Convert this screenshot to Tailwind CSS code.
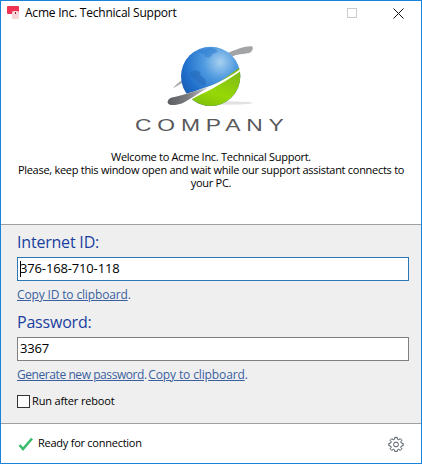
<!DOCTYPE html>
<html lang="en">
<head>
    <meta charset="UTF-8">
    <title>Acme Inc. Technical Support</title>
    <script src="https://cdn.jsdelivr.net/npm/@tailwindcss/browser@4"></script>
</head>
<body class="bg-white">
<div class="w-[422px] h-[464px] flex flex-col border border-[#1883d7] font-['Open_Sans',sans-serif] text-[12px] text-black overflow-hidden">
    <!-- title bar -->
    <header class="h-[30px] pb-[6px] flex items-center shrink-0 pl-[6px]">
        <svg width="13" height="14" viewBox="0 0 13 14" class="mr-[5px]">
            <rect x="0" y="0" width="12" height="8" rx="1" fill="#ee3355"/>
            <rect x="5" y="5" width="7" height="8" rx="1.5" fill="#f8d4d8"/>
            <rect x="8" y="6" width="1" height="2" fill="#8a2a38"/>
        </svg>
        <span class="tracking-[-0.22px]">Acme Inc. Technical Support</span>
        <div class="ml-auto flex items-center">
            <div class="w-[10px] h-[10px] border border-[#cccccc] mr-[36px]"></div>
            <svg width="11" height="11" viewBox="0 0 11 11" class="mr-[17px]"><path d="M.5.5l10 10M10.5.5l-10 10" stroke="#111" stroke-width="1" fill="none"/></svg>
        </div>
    </header>

    <!-- logo and welcome text -->
    <section class="h-[193px] shrink-0 flex flex-col items-center">
        <svg width="180" height="110" viewBox="0 0 540 330" class="shrink-0">
            <defs>
                <radialGradient id="blue" cx="0.66" cy="0.26" r="0.8">
                    <stop offset="0" stop-color="#a8d0f0"/>
                    <stop offset="0.35" stop-color="#4f9ae0"/>
                    <stop offset="0.75" stop-color="#1f6fcb"/>
                    <stop offset="1" stop-color="#1a5cb0"/>
                </radialGradient>
                <linearGradient id="green" x1="0.8" y1="0" x2="0.3" y2="1">
                    <stop offset="0" stop-color="#78b21c"/>
                    <stop offset="0.6" stop-color="#97d806"/>
                    <stop offset="1" stop-color="#74b40c"/>
                </linearGradient>
                <linearGradient id="swoosh" x1="0" y1="0" x2="1" y2="0">
                    <stop offset="0" stop-color="#5a5c5f"/>
                    <stop offset="0.5" stop-color="#7b7d80"/>
                    <stop offset="1" stop-color="#c4c5c7"/>
                </linearGradient>
                <clipPath id="globe"><circle cx="269" cy="136" r="89"/></clipPath>
            </defs>
            <ellipse cx="310" cy="216" rx="85" ry="5" fill="#e2e2e2"/>
            <path d="M320 66C345 55 375 44 392 46C399 50 395 62 385 66C368 69 345 70 335 76Z" fill="#a3a4a6"/>
            <path d="M156 172C163 162 172 155 182 148L183 156C174 161 165 167 156 172Z" fill="#a9aaac"/>
            <circle cx="269" cy="136" r="89" fill="url(#blue)"/>
            <g clip-path="url(#globe)">
                <path d="M230 62l14-6 22-6 18 4 6 8-16 8-8 10-12-2-6-10-12-2Z" fill="#2f7bcf" opacity="0.55"/>
                <path d="M208 122l14-5 14 5 3 13 13 8 4 14-8 8-12-8-14-13-12-10Z" fill="#2568b8" opacity="0.55"/>
                <path d="M150 240L210 195L300 150L380 92L380 240Z" fill="url(#green)"/>
            </g>
            <path d="M150 200C195 190 250 172 290 155C325 138 355 118 383 95C365 118 340 134 310 152C285 167 262 180 240 190C215 204 195 214 180 218C160 223 143 224 140 215C139 209 143 203 150 200Z" fill="#ffffff"/>
            <path d="M150 200C175 195 225 181 262 168C245 180 225 192 205 205C195 212 187 216 180 218C160 223 143 224 140 215C139 209 143 203 150 200Z" fill="url(#swoosh)"/>
            <text transform="translate(42 301) scale(1.4 1)" fill="#58595b" font-family="Liberation Sans, sans-serif" font-size="49" letter-spacing="12.5">COMPANY</text>
        </svg>
        <p class="mt-[9px] w-[400px] text-center text-[11px] leading-[13px] tracking-[-0.28px]">Welcome to Acme Inc. Technical Support.<br>Please, keep this window open and wait while our support assistant connects to your PC.</p>
    </section>

    <!-- id and password -->
    <main class="flex-1 bg-[#efefef] border-y border-[#a0a0a0] px-[16px] pt-[6px]">
        <h2 class="text-[16px] leading-[22px] text-[#1a3fa0] tracking-[-0.2px]">Internet ID:</h2>
        <div class="relative mt-[4px] w-[392px] h-[24px] border border-[#2b77b5] bg-white flex items-center pl-[2px] text-[13px] tracking-[-0.15px]">
            376-168-710-118
            <span class="absolute left-[2px] top-[3px] w-px h-[16px] bg-black"></span>
        </div>
        <a class="block mt-[6px] leading-[16px] text-[#3a5f9e] tracking-[-0.15px]"><span class="underline">Copy ID to clipboard</span>.</a>
        <h2 class="mt-[8px] text-[16px] leading-[22px] text-[#1a3fa0] tracking-[-0.2px]">Password:</h2>
        <div class="mt-[4px] w-[392px] h-[24px] border border-[#808080] bg-white flex items-center pl-[2px] text-[13px] tracking-[-0.15px]">3367</div>
        <p class="mt-[6px] leading-[16px] text-[#3a5f9e] tracking-[-1px]"><a class="underline tracking-[-0.43px]">Generate new password</a>. <a class="underline tracking-[-0.12px]">Copy to clipboard</a>.</p>
        <label class="mt-[10px] flex items-center gap-[2px] text-[11px] tracking-[-0.15px]">
            <span class="w-[13px] h-[13px] border border-[#333333] bg-white"></span>
            <span>Run after reboot</span>
        </label>
    </main>

    <!-- status bar -->
    <footer class="h-[39px] shrink-0 flex items-center pl-[17px] pr-[17px]">
        <svg width="16" height="14" viewBox="0 0 16 14" class="mr-[4px]"><path d="M1.5 8l3.5 4L14 1.5" stroke="#3dbb6c" stroke-width="2.6" fill="none"/></svg>
        <span class="text-[11px] tracking-[-0.25px]">Ready for connection</span>
        <svg width="16" height="16" viewBox="0 0 24 24" class="ml-auto" fill="none" stroke="#4a5160" stroke-width="1.5">
            <path d="M10.3 2h3.4l.5 2.8 1.9.8 2.3-1.6 2.4 2.4-1.6 2.3.8 1.9 2.8.5v3.4l-2.8.5-.8 1.9 1.6 2.3-2.4 2.4-2.3-1.6-1.9.8-.5 2.8h-3.4l-.5-2.8-1.9-.8-2.3 1.6-2.4-2.4 1.6-2.3-.8-1.9-2.8-.5v-3.4l2.8-.5.8-1.9-1.6-2.3 2.4-2.4 2.3 1.6 1.9-.8z"/>
            <circle cx="12" cy="12.7" r="3.6"/>
        </svg>
    </footer>
</div>
</body>
</html>
